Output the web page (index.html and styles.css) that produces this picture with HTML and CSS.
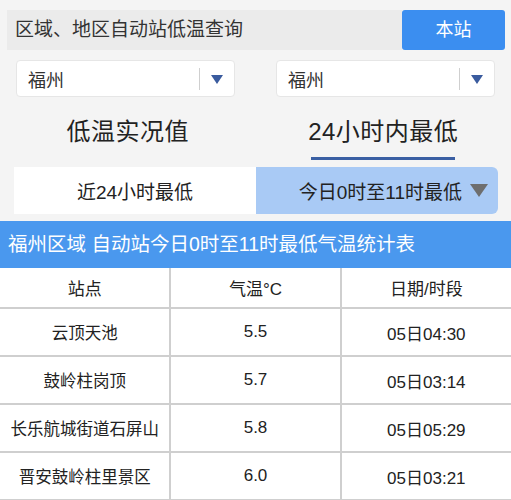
FILE: index.html
```html
<!DOCTYPE html>
<html lang="zh-CN">
<head>
<meta charset="utf-8">
<link rel="stylesheet" href="styles.css">
</head>
<body>
<div class="page">
  <div class="topbar">
    <div class="title">区域、地区自动站低温查询</div>
    <div class="btn">本站</div>
  </div>
  <div class="selects">
    <div class="select"><span class="val">福州</span><span class="div"></span><span class="arrow"></span></div>
    <div class="select"><span class="val">福州</span><span class="div"></span><span class="arrow"></span></div>
  </div>
  <div class="tabs">
    <div class="tab"><span>低温实况值</span></div>
    <div class="tab active"><span>24小时内最低</span></div>
  </div>
  <div class="subtabs">
    <div class="sub">近24小时最低</div>
    <div class="sub on">今日0时至11时最低<span class="tri"></span></div>
  </div>
  <div class="caption">福州区域 自动站今日0时至11时最低气温统计表</div>
  <table class="grid">
    <thead>
      <tr><th>站点</th><th>气温°C</th><th>日期/时段</th></tr>
    </thead>
    <tbody>
      <tr><td>云顶天池</td><td>5.5</td><td>05日04:30</td></tr>
      <tr><td>鼓岭柱岗顶</td><td>5.7</td><td>05日03:14</td></tr>
      <tr><td>长乐航城街道石屏山</td><td>5.8</td><td>05日05:29</td></tr>
      <tr><td>晋安鼓岭柱里景区</td><td>6.0</td><td>05日03:21</td></tr>
    </tbody>
  </table>
</div>
</body>
</html>
```
FILE: styles.css
```css
html, body {
  margin: 0;
  padding: 0;
  background: #f4f4f4;
}
body {
  font-family: "Liberation Sans", "Noto Sans CJK SC", sans-serif;
  color: #333;
}
.page {
  width: 511px;
  height: 500px;
  overflow: hidden;
  padding-top: 10px;
  box-sizing: border-box;
}
.topbar {
  display: flex;
  height: 40px;
  margin: 0 6px 0 7px;
}
.title {
  flex: 1;
  background: #ebebeb;
  font-size: 19px;
  line-height: 40px;
  padding-left: 8px;
  color: #333;
}
.btn {
  width: 103px;
  background: #3b8ef0;
  color: #fff;
  border-radius: 3px;
  font-size: 18px;
  line-height: 40px;
  text-align: center;
}
.selects {
  display: flex;
  gap: 41px;
  padding: 0 16px;
  margin-top: 10px;
}
.select {
  flex: 1;
  height: 37px;
  background: #fff;
  border: 1px solid #e6e6e6;
  border-radius: 4px;
  box-sizing: border-box;
  display: flex;
  align-items: center;
}
.select .val {
  flex: 1;
  font-size: 18px;
  padding-left: 11px;
  color: #333;
}
.select .div {
  width: 1px;
  height: 22px;
  background: #cfcfcf;
}
.select .arrow {
  width: 0;
  height: 0;
  border-left: 6px solid transparent;
  border-right: 6px solid transparent;
  border-top: 9px solid #3a5b9e;
  margin: 2px 11px 0 11px;
}
.tabs {
  display: flex;
  margin-top: 18px;
  height: 52px;
}
.tab {
  flex: 1;
  display: flex;
  justify-content: center;
}
.tab span {
  position: relative;
  font-size: 24px;
  line-height: 34px;
  color: #222;
  height: 45px;
  letter-spacing: 0.5px;
}
.tab.active span::after {
  content: "";
  position: absolute;
  left: 50%;
  bottom: 0;
  width: 144px;
  margin-left: -72px;
  height: 3px;
  background: #3a5fa3;
}
.subtabs {
  display: flex;
  margin: 0 13px 0 14px;
  height: 47px;
}
.sub {
  width: 242px;
  box-sizing: border-box;
  display: flex;
  align-items: center;
  justify-content: center;
  font-size: 19px;
  background: #fff;
  color: #222;
}
.sub.on {
  background: #a9caf5;
  border-radius: 0 6px 6px 0;
  justify-content: flex-end;
  padding-right: 10px;
}
.tri {
  display: inline-block;
  width: 0;
  height: 0;
  border-left: 9px solid transparent;
  border-right: 9px solid transparent;
  border-top: 13px solid #6e6e6e;
  margin-left: 8px;
}
.caption {
  margin-top: 7px;
  height: 47px;
  background: #4a98ee;
  color: #fff;
  font-size: 19.5px;
  line-height: 47px;
  padding-left: 8px;
}
.grid {
  width: 511px;
  border-collapse: collapse;
  background: #fff;
  table-layout: fixed;
}
.grid th, .grid td {
  border: 2px solid #cfcfcf;
  text-align: center;
  font-size: 17px;
  font-weight: normal;
  color: #222;
  padding: 0;
}
.grid td:first-child {
  font-size: 16.5px;
}
.grid tr > :first-child { border-left: none; }
.grid tr > :last-child { border-right: none; }
.grid thead th {
  border-top: none;
  height: 39px;
}
.grid td {
  height: 46px;
}
```
